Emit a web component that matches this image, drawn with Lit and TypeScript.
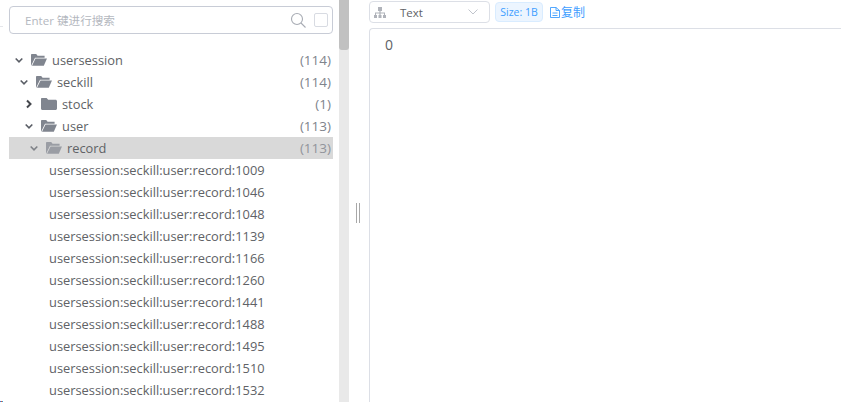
import { LitElement, html, css, svg } from "lit";
import { customElement } from "lit/decorators.js";

const openFolder = svg`<svg class="fi" viewBox="0 0 16 12"><path d="M0 12V.8C0 .3.3 0 .8 0H5.200L6.600 1.800H13.600V3.800H4L0 12z" fill="#80858f"/><path d="M4.500 4.600H16L12.800 11.800H1z" fill="#80858f"/></svg>`;
const closedFolder = svg`<svg class="fi" viewBox="0 0 16 12"><path d="M1 0H5.600L7.200 1.800H14.500C15.300 1.800 16 2.500 16 3.300V10.500C16 11.300 15.300 12 14.500 12H1.500C.7 12 0 11.300 0 10.500V1C0 .4.400 0 1 0z" fill="#80858f"/></svg>`;
const chevDown = svg`<svg class="ch" viewBox="0 0 10 10"><path d="M1.700 3.500L5 6.800 8.300 3.500" fill="none" stroke="#5a5e66" stroke-width="1.600"/></svg>`;
const chevRight = svg`<svg class="ch" viewBox="0 0 10 10"><path d="M3 1.500L6.500 5 3 8.500" fill="none" stroke="#44474d" stroke-width="2"/></svg>`;

const tree = [
  { name: "usersession", count: "(114)", pad: 5, open: true, sel: false },
  { name: "seckill", count: "(114)", pad: 10, open: true, sel: false },
  { name: "stock", count: "(1)", pad: 15, open: false, sel: false },
  { name: "user", count: "(113)", pad: 15, open: true, sel: false },
  { name: "record", count: "(113)", pad: 20, open: true, sel: true },
];
const keys = ["1009","1046","1048","1139","1166","1260","1441","1488","1495","1510","1532"];

@customElement("app-root")
export class AppRoot extends LitElement {
  static styles = css`
    :host { display: block; position: relative; height: 402px; overflow: hidden; background: #fff;
      font-family: "Open Sans", "Noto Sans CJK SC", sans-serif; color: #606266; }
    * { box-sizing: border-box; }
    .page { display: flex; height: 402px; }
    .left { width: 339px; flex: none; padding: 6px 6px 0 9px; overflow: hidden; }
    .search { height: 28px; border: 1px solid #c8ccd6; border-radius: 4px; display: flex; align-items: center;
      padding: 0 4px 0 15px; font-size: 11.600px; color: #b4b8c0; }
    .search .ph { flex: 1; }
    .search svg { width: 16px; height: 16px; margin-right: 8px; margin-top: -1px; }
    .cb { width: 14px; height: 14px; border: 1px solid #d8dbe2; border-radius: 2px; }
    .tree { margin-top: 15px; }
    .row { height: 22px; display: flex; align-items: center; font-size: 12.850px; padding-right: 2px; color: #606266; }
    .row.sel { background: #d9d9d9; }
    .row.sel .ch, .row.sel .fi { opacity: .7; }
    .row.sel .ct { opacity: .8; }
    .ch { width: 10px; height: 10px; flex: none; margin-right: 7px; }
    .fi { width: 16px; height: 12px; flex: none; margin-right: 5px; }
    .nm { flex: 1; }
    .ct { color: #80848c; font-size: 13.500px; }
    .leaf { height: 22px; line-height: 22px; padding-left: 40px; font-size: 12.850px; color: #606266; white-space: nowrap; }
    .track { width: 10px; flex: none; background: #e9e9e9; }
    .thumb { height: 50px; background: #c1c1c1; border-radius: 0 0 3px 3px; }
    .split { width: 20px; flex: none; display: flex; justify-content: center; align-items: flex-start; gap: 2px; padding-top: 203px; padding-right: 2px; }
    .split i { width: 1px; height: 20px; background: #a8a8a8; }
    .right { flex: 1; min-width: 0; display: flex; flex-direction: column; }
    .bar { display: flex; align-items: center; height: 28px; padding-bottom: 5px; padding-top: 1px; }
    .sel-box { width: 121px; height: 22px; border: 1px solid #dcdfe6; border-radius: 4px; display: flex; align-items: center;
      padding: 0 11px 0 4px; font-size: 11.500px; color: #606266; }
    .sel-box svg.tr { width: 12px; height: 11px; }
    .sel-box .t { flex: 1; padding-left: 14px; }
    .tag { margin-left: 5px; width: 48px; height: 20px; border: 1px solid #d9ecff; background: #ecf5ff; border-radius: 4px; color: #409eff;
      font-size: 10.500px; display: flex; align-items: center; justify-content: center; white-space: nowrap; }
    .copy { margin-left: 7px; color: #409eff; font-size: 12px; display: flex; align-items: center; }
    .copy svg { width: 10px; height: 11px; margin-right: 1px; }
    .view { flex: 1; border: 1px solid #dcdfe6; border-right: none; border-bottom: none; border-radius: 4px 0 0 0;
      padding: 6px 15px; font-size: 14px; color: #606266; }
    .tick { position: absolute; left: 0; top: 26px; width: 3px; height: 1px; background: #e4e6ea; }
    .dots { position: absolute; left: 0; bottom: 0; width: 3px; height: 1px;
      background: linear-gradient(90deg, #2f7fe0 0 1px, #e8502a 1px 2px, #2a9fd6 2px 3px); }
  `;

  render() {
    return html`<div class="page">
      <div class="left">
        <div class="search">
          <span class="ph">Enter 键进行搜索</span>
          <svg viewBox="0 0 16 16"><circle cx="7" cy="7" r="5.500" fill="none" stroke="#a8acb4" stroke-width="1.100"/><path d="M11 11l4.500 4.500" stroke="#a8acb4" stroke-width="1.100"/></svg>
          <span class="cb"></span>
        </div>
        <div class="tree">
          ${tree.map((r) => html`<div class="row ${r.sel ? "sel" : ""}" style="padding-left:${r.pad}px">
            ${r.open ? chevDown : chevRight}${r.open ? openFolder : closedFolder}
            <span class="nm">${r.name}</span><span class="ct">${r.count}</span>
          </div>`)}
          ${keys.map((k) => html`<div class="leaf">usersession:seckill:user:record:${k}</div>`)}
        </div>
      </div>
      <div class="track"><div class="thumb"></div></div>
      <div class="split"><i></i><i></i></div>
      <div class="right">
        <div class="bar">
          <div class="sel-box">
            <svg class="tr" viewBox="0 0 12 11"><path d="M4 0h4v4H6.600v1.500H11V8h1v3H9V8h1V6.500H6.600V8H7.500v3h-3V8h.9V6.500H2V8h1v3H0V8h1V5.500h4.400V4H4z" fill="#b0b3ba"/></svg>
            <span class="t">Text</span>
            <svg width="10" height="6" viewBox="0 0 10 6"><path d="M.5.500L5 5 9.500.5" fill="none" stroke="#c0c4cc" stroke-width="1"/></svg>
          </div>
          <span class="tag">Size: 1B</span>
          <span class="copy"><svg viewBox="0 0 10 11"><path d="M.5.500H6L9.500 3.500V10.500H.5zM6 .5V3.500H9.500M2.500 6H7.500M2.500 8.500H7.500" fill="none" stroke="#409eff" stroke-width=".9"/></svg>复制</span>
        </div>
        <div class="view">0</div>
      </div>
    </div>
    <div class="tick"></div>
    <div class="dots"></div>`;
  }
}
